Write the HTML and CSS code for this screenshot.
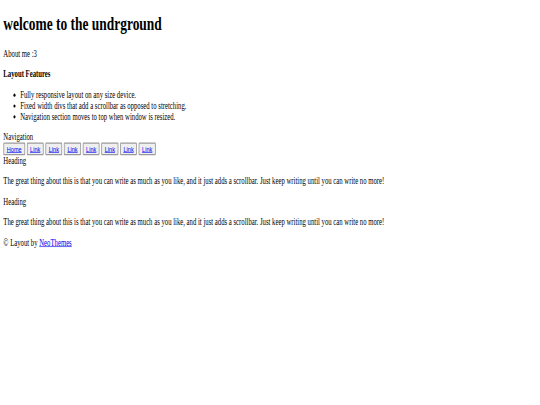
FILE: index.html
```html
<!DOCTYPE html>
<html lang="en">
<head>
<meta charset="utf-8">
<title>welcome to the undrground</title>
<link rel="stylesheet" href="styles.css">
</head>
<body>
<div class="frame">
<div class="viewport">
  <div class="page">
    <header class="site-header">
      <h1 class="title">welcome to the undrground</h1>
    </header>
    <section class="about">
      <p class="text">About me :3</p>
      <p class="text"><strong>Layout Features</strong></p>
      <ul class="features">
        <li>Fully responsive layout on any size device.</li>
        <li>Fixed width divs that add a scrollbar as opposed to stretching.</li>
        <li>Navigation section moves to top when window is resized.</li>
      </ul>
    </section>
    <nav class="nav">
      <div class="nav-title">Navigation</div>
      <div class="nav-row">
        <span class="nav-btn"><a href="#">Home</a></span>
        <span class="nav-btn"><a href="#">Link</a></span>
        <span class="nav-btn"><a href="#">Link</a></span>
        <span class="nav-btn"><a href="#">Link</a></span>
        <span class="nav-btn"><a href="#">Link</a></span>
        <span class="nav-btn"><a href="#">Link</a></span>
        <span class="nav-btn"><a href="#">Link</a></span>
        <span class="nav-btn"><a href="#">Link</a></span>
      </div>
    </nav>
    <main class="content">
      <div class="heading">Heading</div>
      <p class="text">The great thing about this is that you can write as much as you like, and it just adds a scrollbar. Just keep writing until you can write no more!</p>
      <div class="heading">Heading</div>
      <p class="text">The great thing about this is that you can write as much as you like, and it just adds a scrollbar. Just keep writing until you can write no more!</p>
    </main>
    <footer class="footer">
      <p class="text">&copy; Layout by <a href="#">NeoThemes</a></p>
    </footer>
  </div>
</div>
</div>
</body>
</html>
```
FILE: styles.css
```css
html, body {
  margin: 0;
  padding: 0;
  overflow: hidden;
  background: #ffffff;
}

.frame {
  width: 540px;
  height: 405px;
  overflow: hidden;
}

/* The reference is a wide page squeezed into 540x405 */
.viewport {
  display: flow-root;
  width: 1286px;
  height: 670px;
  transform: scale(0.42, 0.604);
  transform-origin: 0 0;
  font-family: "Liberation Serif", "Times New Roman", serif;
  font-size: 16px;
  color: #000000;
}

.page {
  margin: 8px;
}

.title {
  font-size: 32px;
  font-weight: bold;
  margin: 21.44px 0;
}

.text {
  margin: 16px 0;
}

.features {
  margin: 16px 0;
  padding-left: 40px;
}

.nav-title {
  margin: 0;
}

.nav-row {
  line-height: normal;
}

.nav-btn {
  display: inline-block;
  font-family: "Liberation Sans", Arial, sans-serif;
  font-size: 13.333px;
  padding: 1px 6px;
  background: #efefef;
  border: 2px solid #9a9a9a;
  border-radius: 2px;
  vertical-align: middle;
}

.nav-btn a {
  color: #0000ee;
}

a {
  color: #0000ee;
}

.heading {
  margin: 0;
}
```
